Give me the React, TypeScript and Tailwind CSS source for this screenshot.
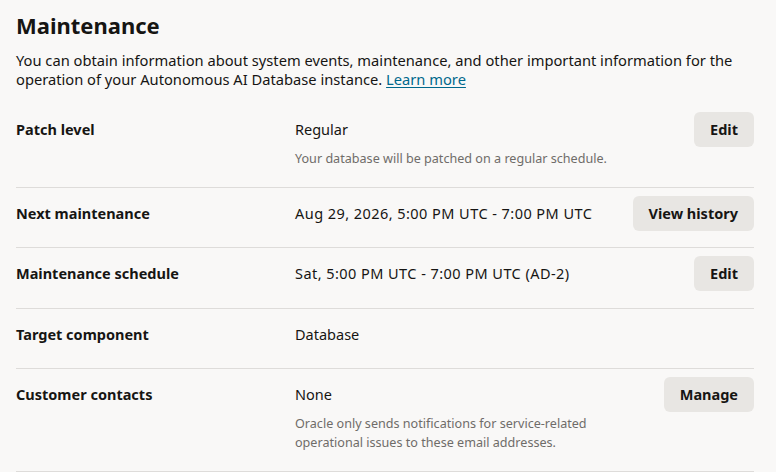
import React from "react";

type Row = {
  label: string;
  value: string;
  note?: string[];
  action?: string;
  wide?: boolean;
};

const rows: Row[] = [
  {
    label: "Patch level",
    value: "Regular",
    note: ["Your database will be patched on a regular schedule."],
    action: "Edit",
  },
  {
    label: "Next maintenance",
    value: "Aug 29, 2026, 5:00 PM UTC - 7:00 PM UTC",
    action: "View history",
    wide: true,
  },
  {
    label: "Maintenance schedule",
    value: "Sat, 5:00 PM UTC - 7:00 PM UTC (AD-2)",
    action: "Edit",
    wide: true,
  },
  { label: "Target component", value: "Database" },
  {
    label: "Customer contacts",
    value: "None",
    note: [
      "Oracle only sends notifications for service-related",
      "operational issues to these email addresses.",
    ],
    action: "Manage",
  },
];

export default function App() {
  return (
    <div
      className="min-h-[472px] bg-[#f9f8f7] text-[#161513] pl-4 pr-[22px]"
      style={{ fontFamily: '"Noto Sans", "Open Sans", sans-serif' }}
    >
      <h1 className="pt-[9px] text-[22px] leading-8 font-bold">Maintenance</h1>
      <p className="mt-[10px] text-[14.7px] leading-[19.2px]">
        You can obtain information about system events, maintenance, and other
        important information for the operation of your Autonomous AI Database
        instance.{" "}
        <a href="#" className="text-[#00688c] underline underline-offset-2">
          Learn more
        </a>
      </p>
      <div className="mt-[15px]">
        {rows.map((row, i) => (
          <div
            key={row.label}
            className={`flex items-start border-b border-[#dedcda] pt-2 ${
              i === 2 ? "pb-[17px]" : "pb-4"
            }`}
          >
            <div className="w-[279px] shrink-0 text-[14.5px] leading-[35px] font-bold">
              {row.label}
            </div>
            <div className="flex-1 min-w-0">
              <div
                className={`text-[14.5px] leading-[35px] ${
                  row.wide ? "tracking-[0.45px]" : ""
                }`}
              >
                {row.value}
              </div>
              {row.note && (
                <div className="mt-[2px] pb-[3px] text-[12.6px] leading-[19px] text-[#6f6c69]">
                  {row.note.map((n) => (
                    <div key={n}>{n}</div>
                  ))}
                </div>
              )}
            </div>
            {row.action ? (
              <button className="h-[35px] shrink-0 rounded-md bg-[#e8e6e3] px-4 text-[14.5px] font-bold">
                {row.action}
              </button>
            ) : (
              <div className="h-[35px]" />
            )}
          </div>
        ))}
      </div>
    </div>
  );
}
